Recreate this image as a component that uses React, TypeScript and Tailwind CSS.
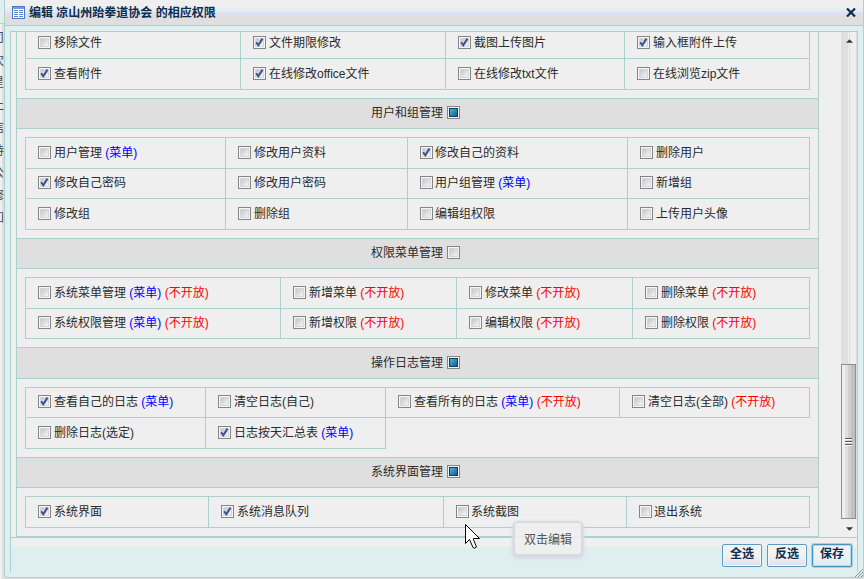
import React from 'react';

type CheckState = 'on' | 'off' | 'partial';

interface Permission {
  label: string;
  checked?: boolean;
  menu?: boolean;
  closed?: boolean;
}

interface PermissionRow {
  height: string;
  pad: string;
  items: Permission[];
}

interface PermissionGroup {
  title: string;
  state: CheckState;
  header: string;
  widths: string[];
  tight?: number[]; // columns whose labels sit closer to their box
  rows: PermissionRow[];
}

const TALL = 'h-[31px]';
const SHORT = 'h-[30px]';

const attachmentWidths = ['w-[215px]', 'w-[205px]', 'w-[179px]', 'w-[185px]'];

const attachmentRows: PermissionRow[] = [
  {
    height: 'h-[27px]',
    pad: 'pt-1',
    items: [
      { label: '移除文件' },
      { label: '文件期限修改', checked: true },
      { label: '截图上传图片', checked: true },
      { label: '输入框附件上传', checked: true },
    ],
  },
  {
    height: TALL,
    pad: 'pt-2',
    items: [
      { label: '查看附件', checked: true },
      { label: '在线修改office文件', checked: true },
      { label: '在线修改txt文件' },
      { label: '在线浏览zip文件' },
    ],
  },
];

const groups: PermissionGroup[] = [
  {
    title: '用户和组管理',
    state: 'partial',
    header: 'h-[31px] pt-[7px]',
    widths: ['w-[200px]', 'w-[182px]', 'w-[220px]', 'w-[182px]'],
    tight: [2],
    rows: [
      {
        height: TALL,
        pad: 'pt-2',
        items: [
          { label: '用户管理', menu: true },
          { label: '修改用户资料' },
          { label: '修改自己的资料', checked: true },
          { label: '删除用户' },
        ],
      },
      {
        height: SHORT,
        pad: 'pt-[7px]',
        items: [
          { label: '修改自己密码', checked: true },
          { label: '修改用户密码' },
          { label: '用户组管理', menu: true },
          { label: '新增组' },
        ],
      },
      {
        height: TALL,
        pad: 'pt-2',
        items: [
          { label: '修改组' },
          { label: '删除组' },
          { label: '编辑组权限' },
          { label: '上传用户头像' },
        ],
      },
    ],
  },
  {
    title: '权限菜单管理',
    state: 'off',
    header: 'h-[31px] pt-[7px]',
    widths: ['w-[255px]', 'w-[176px]', 'w-[176px]', 'w-[177px]'],
    rows: [
      {
        height: TALL,
        pad: 'pt-2',
        items: [
          { label: '系统菜单管理', menu: true, closed: true },
          { label: '新增菜单', closed: true },
          { label: '修改菜单', closed: true },
          { label: '删除菜单', closed: true },
        ],
      },
      {
        height: SHORT,
        pad: 'pt-[7px]',
        items: [
          { label: '系统权限管理', menu: true, closed: true },
          { label: '新增权限', closed: true },
          { label: '编辑权限', closed: true },
          { label: '删除权限', closed: true },
        ],
      },
    ],
  },
  {
    title: '操作日志管理',
    state: 'partial',
    header: 'h-[32px] pt-2',
    widths: ['w-[180px]', 'w-[180px]', 'w-[234px]', 'w-[190px]'],
    rows: [
      {
        height: SHORT,
        pad: 'pt-[7px]',
        items: [
          { label: '查看自己的日志', checked: true, menu: true },
          { label: '清空日志(自己)' },
          { label: '查看所有的日志', menu: true, closed: true },
          { label: '清空日志(全部)', closed: true },
        ],
      },
      {
        height: TALL,
        pad: 'pt-2',
        items: [
          { label: '删除日志(选定)' },
          { label: '日志按天汇总表', checked: true, menu: true },
        ],
      },
    ],
  },
  {
    title: '系统界面管理',
    state: 'partial',
    header: 'h-[31px] pt-[7px]',
    widths: ['w-[183px]', 'w-[235px]', 'w-[183px]', 'w-[183px]'],
    tight: [2, 3],
    rows: [
      {
        height: TALL,
        pad: 'pt-2',
        items: [
          { label: '系统界面', checked: true },
          { label: '系统消息队列', checked: true },
          { label: '系统截图' },
          { label: '退出系统' },
        ],
      },
    ],
  },
];

const CheckBox: React.FC<{ state: CheckState }> = ({ state }) => (
  <span className="flex size-[13px] shrink-0 items-center justify-center border border-[#858585] bg-[#f6f6f6]">
    {state === 'partial' ? (
      <span className="size-[9px] border border-[#123b63] bg-linear-to-br from-[#4fb5dc] to-[#10608f]" />
    ) : (
      <span className="size-[9px] border border-[#d4d6da] bg-linear-to-br from-[#c2c6cd] to-[#f6f6f6]">
        {state === 'on' && (
          <svg width="9" height="9" viewBox="0 0 9 9" className="-ml-px -mt-px">
            <path d="M1.2 4.2 3.3 7.2 7.5 0.6" fill="none" stroke="#3c4f90" strokeWidth="2" />
          </svg>
        )}
      </span>
    )}
  </span>
);

interface CellProps {
  item: Permission;
  width: string;
  pad: string;
  tight: boolean;
}

const PermissionCell: React.FC<CellProps> = ({ item, width, pad, tight }) => (
  <div className={`flex shrink-0 items-start border-r border-b border-[#acd0ce] pl-3 ${width} ${pad}`}>
    <CheckBox state={item.checked ? 'on' : 'off'} />
    <span className={`leading-[15px] ${tight ? 'ml-0.5' : 'ml-[3px]'}`}>
      {item.label}
      {item.menu && <span className="text-[#0000ff]"> (菜单)</span>}
      {item.closed && <span className="text-[#ff0000]"> (不开放)</span>}
    </span>
  </div>
);

interface RowsProps {
  rows: PermissionRow[];
  widths: string[];
  tight?: number[];
}

const Rows: React.FC<RowsProps> = ({ rows, widths, tight = [] }) => (
  <>
    {rows.map((row, i) => (
      <div key={i} className={`flex border-l border-[#acd0ce] ${row.height}`}>
        {row.items.map((item, j) => (
          <PermissionCell key={item.label} item={item} width={widths[j]} pad={row.pad} tight={tight.includes(j)} />
        ))}
      </div>
    ))}
  </>
);

const BackgroundStrip = () => (
  <div className="w-1 shrink-0 overflow-hidden bg-[linear-gradient(to_right,#f0f0f0_2px,#dedede_2px)]">
    <div className="h-6 border-b border-[#b5d3d2] bg-[#dfeeee]" />
    <div className="flex w-1 flex-col gap-[9.5px] overflow-hidden pt-2 leading-[13px] text-[#444]">
      {['司', '次', '星', '上', '信', '持', '公', '修', '知'].map((c) => (
        <span key={c} className="-ml-2">{c}</span>
      ))}
    </div>
  </div>
);

const TitleBar = () => (
  <div className="flex h-[26px] items-center border-b border-[#acd0ce] bg-[linear-gradient(#efefef_8px,#dfeeef_9px,#dfeeef_12px,#dfdff0_12px,#dfdff0_16px,#dfdfdf_16px)] pr-[7px] pl-[7px]">
    <svg width="13" height="13" viewBox="0 0 13 13" shapeRendering="crispEdges">
      <rect x="0.5" y="0.5" width="12" height="12" fill="#fff" stroke="#4a78c4" />
      <rect x="1" y="1" width="11" height="2" fill="#6f9fe0" />
      <path d="M2 4.5h4M7 4.5h4M2 6.5h4M7 6.5h4M2 8.5h4M7 8.5h4M2 10.5h4M7 10.5h4" stroke="#5a86cf" />
    </svg>
    <h1 className="ml-1 flex-1 font-bold text-[#0e2d4f]">编辑 凉山州跆拳道协会 的相应权限</h1>
    <button aria-label="关闭">
      <svg width="10" height="9" viewBox="0 0 10 9">
        <path d="M1 0.5 9 8.5M9 0.5 1 8.5" stroke="#0e2d4f" strokeWidth="2.2" />
      </svg>
    </button>
  </div>
);

const ScrollBar = () => (
  <div className="flex w-4 flex-col bg-[linear-gradient(to_right,#dfdfdf_7px,#efefef_7px,#efefef_8px,#dfdfdf_8px,#dfdfdf_9px,#efefef_9px,#efefef_15px,#dfdfdf_15px)]">
    <div className="flex h-[332px] justify-center pt-[7px]">
      <svg width="7" height="4" viewBox="0 0 8 4">
        <path d="M4 0 8 4H0z" fill="#333" />
      </svg>
    </div>
    <div className="flex h-[155px] w-[15px] flex-col items-center justify-center gap-px border border-[#8f8f93] bg-[linear-gradient(to_right,#efefef_3px,#dfdfdf_3px,#dfdfdf_6px,#cfcfcf_6px,#cfcfcf_9px,#bfbfc8_9px)]">
      <span className="h-0.5 w-[7px] border-b border-white bg-[#555]" />
      <span className="h-0.5 w-[7px] border-b border-white bg-[#555]" />
      <span className="h-0.5 w-[7px] border-b border-white bg-[#555]" />
    </div>
    <div className="flex flex-1 justify-center bg-[#efefef] pt-2">
      <svg width="7" height="4" viewBox="0 0 8 4">
        <path d="M0 0H8L4 4z" fill="#333" />
      </svg>
    </div>
  </div>
);

const buttonClass =
  'flex h-[23px] w-10 justify-center rounded-[2px] border border-[#5b9cc4] bg-linear-to-b from-[#f2f2f2] from-50% to-[#dfdfee] pt-0.5 font-bold leading-[14px] text-[#0e2d4f] shadow-[inset_0_0_0_1px_#f4f7f8]';

const Footer = () => (
  <div className="flex h-[35px] justify-end gap-[5px] bg-[linear-gradient(#efefef_9px,#dfeeee_9px)] pt-1.5 pr-[5px]">
    <button className={buttonClass}>全选</button>
    <button className={buttonClass}>反选</button>
    <button className="flex h-[23px] w-10 justify-center rounded-[2px] border border-[#4b93bf] bg-linear-to-b from-[#f2f2f2] from-40% to-[#dfeeee] pt-0.5 font-bold leading-[14px] text-[#0e2d4f] shadow-[inset_0_0_0_1px_#a8dff2,0_0_0_1px_#a9cfe2]">
      保存
    </button>
  </div>
);

export default function App() {
  return (
    <div className="relative flex h-[579px] w-[864px] overflow-hidden bg-[#e0e0e0] font-['Liberation_Sans','Noto_Sans_CJK_SC',sans-serif] text-[12px] text-[#2b2b2b]">
      <BackgroundStrip />
      <div className="flex h-[578px] w-[860px] flex-col rounded-b border-x border-b border-[#acd0ce] bg-[#dfeeee]">
        <TitleBar />
        <div className="mt-[5px] ml-[5px] h-[541px] w-[848px] border-x border-t border-[#acd0ce]">
          <div className="flex h-[506px] overflow-hidden border-b border-[#acd0ce] bg-[#efefef]">
            <div className="ml-[5px] h-[505px] w-[803px] border-x border-b border-[#acd0ce]">
              <div className="px-2 pb-2">
                <Rows rows={attachmentRows} widths={attachmentWidths} />
              </div>
              {groups.map((group) => (
                <section key={group.title}>
                  <div className={`flex justify-center border-y border-[#acd0ce] bg-[#dfdfdf] pr-1 ${group.header}`}>
                    <span className="mr-1 leading-[15px]">{group.title}</span>
                    <CheckBox state={group.state} />
                  </div>
                  <div className="p-2">
                    <div className="border-t border-[#acd0ce]">
                      <Rows rows={group.rows} widths={group.widths} tight={group.tight} />
                    </div>
                  </div>
                </section>
              ))}
            </div>
            <div className="ml-[22px] flex">
              <ScrollBar />
            </div>
          </div>
          <Footer />
        </div>
      </div>

      <div className="absolute top-[523px] left-[515px] flex h-[31px] w-[66px] items-center justify-center rounded-[3px] bg-[#efefefee] pt-0.5 text-[#555] shadow-[0_0_2px_2px_#d8dade,0_2px_3px_3px_#dadaea]">
        双击编辑
      </div>
      <svg className="absolute top-[523px] left-[464px]" width="17" height="27" viewBox="0 0 17 27">
        <path
          d="M1.5 1.5V20.5L5.5 16.5 9 24.5Q10.5 26 12.5 24L9.5 16.5V15.5H15.5Z"
          fill="#fff"
          stroke="#000"
          strokeWidth="1"
        />
      </svg>
      <svg className="absolute top-[569px] left-[855px]" width="8" height="8" viewBox="0 0 8 8">
        <path d="M0 8 8 0M3 8 8 3M6 8 8 6" stroke="#666" strokeWidth="1" strokeDasharray="1 0.5" />
      </svg>
    </div>
  );
}
